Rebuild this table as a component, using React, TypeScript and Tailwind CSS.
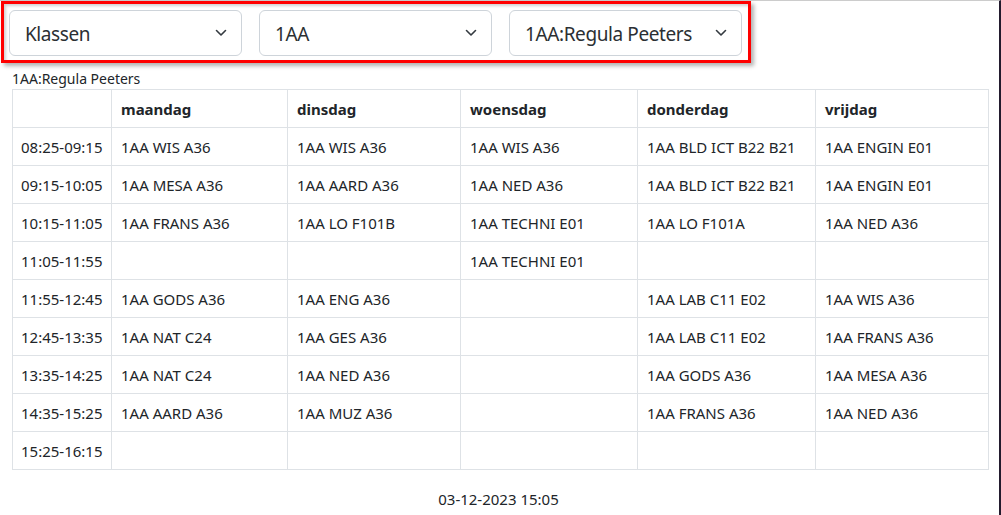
import React from 'react';

const days = ['maandag', 'dinsdag', 'woensdag', 'donderdag', 'vrijdag'];

const rows: [string, string[]][] = [
  ['08:25-09:15', ['1AA WIS A36', '1AA WIS A36', '1AA WIS A36', '1AA BLD ICT B22 B21', '1AA ENGIN E01']],
  ['09:15-10:05', ['1AA MESA A36', '1AA AARD A36', '1AA NED A36', '1AA BLD ICT B22 B21', '1AA ENGIN E01']],
  ['10:15-11:05', ['1AA FRANS A36', '1AA LO F101B', '1AA TECHNI E01', '1AA LO F101A', '1AA NED A36']],
  ['11:05-11:55', ['', '', '1AA TECHNI E01', '', '']],
  ['11:55-12:45', ['1AA GODS A36', '1AA ENG A36', '', '1AA LAB C11 E02', '1AA WIS A36']],
  ['12:45-13:35', ['1AA NAT C24', '1AA GES A36', '', '1AA LAB C11 E02', '1AA FRANS A36']],
  ['13:35-14:25', ['1AA NAT C24', '1AA NED A36', '', '1AA GODS A36', '1AA MESA A36']],
  ['14:35-15:25', ['1AA AARD A36', '1AA MUZ A36', '', '1AA FRANS A36', '1AA NED A36']],
  ['15:25-16:15', ['', '', '', '', '']],
];

const Chevron = () => (
  <svg width="12" height="8" viewBox="0 0 12 8" fill="none">
    <path d="M1.5 1.5L6 6l4.5-4.5" stroke="#343a40" strokeWidth="1.6" strokeLinecap="round" strokeLinejoin="round" />
  </svg>
);

const Select = ({ value }: { value: string }) => (
  <div className="flex items-center justify-between w-[233px] h-[46px] pl-[15px] pr-[14px] bg-white border border-[#ced4da] rounded-[6px] text-[19px] tracking-[-0.4px] text-[#2b2f33]">
    <span className="pt-[3px]">{value}</span>
    <Chevron />
  </div>
);

export default function App() {
  return (
    <div className="h-[515px] w-full bg-white border-t border-t-[#cccccc] border-r-2 border-r-[#231b2e] text-[#212529] font-['Noto_Sans','Open_Sans',sans-serif] flex flex-col">
      <div className="ml-[1px] w-[750px] h-[62px] border-[3px] border-[#ff0000] shadow-[3px_3px_4px_rgba(0,0,0,0.3),inset_2px_2px_3px_rgba(0,0,0,0.18)] flex gap-[17px] pl-[5px] pt-[6px]">
        <Select value="Klassen" />
        <Select value="1AA" />
        <Select value="1AA:Regula Peeters" />
      </div>

      <div className="ml-[12px] mt-[6px] text-[14px] leading-[20px]">1AA:Regula Peeters</div>

      <table className="ml-[12px] w-[976px] border-collapse text-[15px] table-fixed">
        <colgroup>
          <col className="w-[99px]" />
          <col className="w-[176px]" />
          <col className="w-[173px]" />
          <col className="w-[177px]" />
          <col className="w-[178px]" />
          <col className="w-[173px]" />
        </colgroup>
        <thead>
          <tr className="h-[38px]">
            <th className="border border-[#dee2e6] px-[8px]" />
            {days.map((d) => (
              <th key={d} className="border border-[#dee2e6] px-[9px] pt-[2px] text-left font-bold">
                {d}
              </th>
            ))}
          </tr>
        </thead>
        <tbody>
          {rows.map(([time, cells]) => (
            <tr key={time} className="h-[38px]">
              <td className="border border-[#dee2e6] px-[8px] pt-[2px] whitespace-nowrap">{time}</td>
              {cells.map((c, i) => (
                <td key={i} className="border border-[#dee2e6] px-[9px] pt-[2px] whitespace-nowrap">
                  {c}
                </td>
              ))}
            </tr>
          ))}
        </tbody>
      </table>

      <div className="mt-[18px] text-center text-[15px] pr-[2px]">03-12-2023 15:05</div>
    </div>
  );
}
